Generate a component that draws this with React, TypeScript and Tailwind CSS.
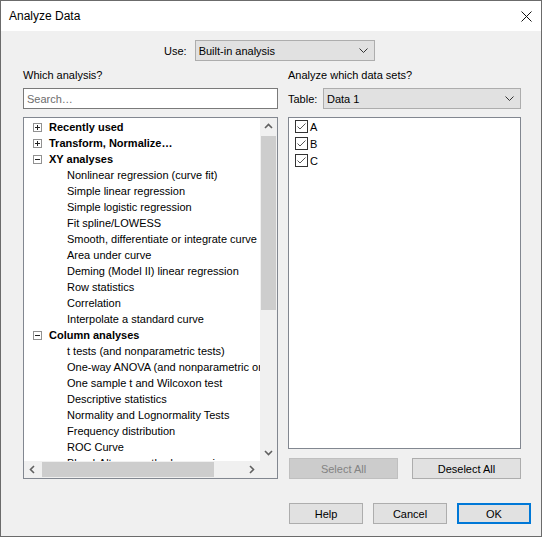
import React from "react";

const FONT = { fontFamily: '"Liberation Sans", Arial, sans-serif' };

type Row = { k: "g+" | "g-" | "i"; t: string };
const rows: Row[] = [
  { k: "g+", t: "Recently used" },
  { k: "g+", t: "Transform, Normalize…" },
  { k: "g-", t: "XY analyses" },
  { k: "i", t: "Nonlinear regression (curve fit)" },
  { k: "i", t: "Simple linear regression" },
  { k: "i", t: "Simple logistic regression" },
  { k: "i", t: "Fit spline/LOWESS" },
  { k: "i", t: "Smooth, differentiate or integrate curve" },
  { k: "i", t: "Area under curve" },
  { k: "i", t: "Deming (Model II) linear regression" },
  { k: "i", t: "Row statistics" },
  { k: "i", t: "Correlation" },
  { k: "i", t: "Interpolate a standard curve" },
  { k: "g-", t: "Column analyses" },
  { k: "i", t: "t tests (and nonparametric tests)" },
  { k: "i", t: "One-way ANOVA (and nonparametric or mixed)" },
  { k: "i", t: "One sample t and Wilcoxon test" },
  { k: "i", t: "Descriptive statistics" },
  { k: "i", t: "Normality and Lognormality Tests" },
  { k: "i", t: "Frequency distribution" },
  { k: "i", t: "ROC Curve" },
  { k: "i", t: "Bland-Altman method comparison" },
];

function Chevron() {
  return (
    <svg width="9" height="5" viewBox="0 0 9 5">
      <polyline points="0.5,0.5 4.5,4.5 8.5,0.5" fill="none" stroke="#333" strokeWidth="1" />
    </svg>
  );
}

function ScrollArrow({ dir }: { dir: "up" | "down" | "left" | "right" }) {
  const p: Record<string, string> = {
    up: "1,6 4.5,2.5 8,6",
    down: "1,3 4.5,6.5 8,3",
    left: "6,1 2.5,4.5 6,8",
    right: "3,1 6.5,4.5 3,8",
  };
  return (
    <svg width="9" height="9" viewBox="0 0 9 9">
      <polyline points={p[dir]} fill="none" stroke="#606060" strokeWidth="1.6" />
    </svg>
  );
}

function Expander({ open }: { open: boolean }) {
  return (
    <div className="relative w-[9px] h-[9px] border border-[#919191] bg-white shrink-0">
      <div className="absolute left-[1px] top-[3px] w-[5px] h-[1px] bg-[#222]" />
      {!open && <div className="absolute left-[3px] top-[1px] w-[1px] h-[5px] bg-[#222]" />}
    </div>
  );
}

function Dropdown({ text, w }: { text: string; w: string }) {
  return (
    <div className={`${w} h-[21px] border border-[#adadad] bg-[#e1e1e1] flex items-center justify-between pl-[3px] pr-[6px]`}>
      <span>{text}</span>
      <Chevron />
    </div>
  );
}

function Checkbox({ label }: { label: string }) {
  return (
    <div className="h-[17px] flex items-center pl-[6px]">
      <div className="w-[13px] h-[13px] border border-[#333] bg-white flex items-center justify-center">
        <svg width="11" height="11" viewBox="0 0 11 11">
          <polyline points="1.5,5.5 4,8 9.5,2.5" fill="none" stroke="#555" strokeWidth="1" />
        </svg>
      </div>
      <span className="ml-[2px]">{label}</span>
    </div>
  );
}

function Btn({ children, cls = "" }: { children: React.ReactNode; cls?: string }) {
  return (
    <div className={`h-[21px] flex items-center justify-center border border-[#adadad] bg-[#e1e1e1] ${cls}`}>
      {children}
    </div>
  );
}

export default function App() {
  return (
    <div
      style={FONT}
      className="w-[542px] h-[537px] border border-[#6b6b6b] bg-[#f0f0f0] flex flex-col text-[11px] text-black leading-[16px] overflow-hidden"
    >
      {/* title bar */}
      <div className="h-[30px] bg-white flex items-center justify-between pl-[8px] pr-[9px] shrink-0">
        <span className="text-[12px]">Analyze Data</span>
        <svg width="11" height="11" viewBox="0 0 11 11">
          <line x1="0.5" y1="0.5" x2="10.5" y2="10.5" stroke="#111" strokeWidth="1" />
          <line x1="10.5" y1="0.5" x2="0.5" y2="10.5" stroke="#111" strokeWidth="1" />
        </svg>
      </div>

      {/* Use row */}
      <div className="mt-[9px] flex items-center pl-[163px]">
        <span>Use:</span>
        <div className="ml-[8px]">
          <Dropdown text="Built-in analysis" w="w-[180px]" />
        </div>
      </div>

      {/* main columns */}
      <div className="flex gap-[10px] pl-[22px] pr-[20px]">
        {/* left */}
        <div className="w-[255px] flex flex-col">
          <div className="mt-[6px] h-[16px]">Which analysis?</div>
          <div className="mt-[5px] h-[21px] border border-[#7a7a7a] bg-white flex items-center pl-[3px] text-[#6d6d6d]">
            Search…
          </div>
          <div className="mt-[8px] h-[362px] border border-[#828790] bg-white flex flex-col">
            <div className="flex flex-1 min-h-0">
              <div className="flex-1 overflow-hidden pt-[1px]">
                {rows.map((r, i) =>
                  r.k === "i" ? (
                    <div key={i} className="h-[16px] pl-[43px] whitespace-nowrap">
                      {r.t}
                    </div>
                  ) : (
                    <div key={i} className="h-[16px] pl-[9px] flex items-center whitespace-nowrap">
                      <Expander open={r.k === "g-"} />
                      <span className="ml-[7px] font-bold">{r.t}</span>
                    </div>
                  )
                )}
              </div>
              {/* vertical scrollbar */}
              <div className="w-[17px] bg-[#f0f0f0] flex flex-col">
                <div className="h-[17px] flex items-center justify-center">
                  <ScrollArrow dir="up" />
                </div>
                <div className="flex-1 pt-[1px]">
                  <div className="h-[174px] mx-[1px] bg-[#cdcdcd]" />
                </div>
                <div className="h-[17px] flex items-center justify-center">
                  <ScrollArrow dir="down" />
                </div>
              </div>
            </div>
            {/* horizontal scrollbar */}
            <div className="h-[17px] flex shrink-0">
              <div className="flex-1 bg-[#f0f0f0] flex items-center">
                <div className="w-[17px] h-[17px] flex items-center justify-center">
                  <ScrollArrow dir="left" />
                </div>
                <div className="flex-1 h-[17px] pl-[1px] py-[1px]">
                  <div className="w-[172px] h-full bg-[#cdcdcd]" />
                </div>
                <div className="w-[17px] h-[17px] flex items-center justify-center">
                  <ScrollArrow dir="right" />
                </div>
              </div>
              <div className="w-[17px] bg-[#f0f0f0]" />
            </div>
          </div>
        </div>

        {/* right */}
        <div className="w-[233px] flex flex-col">
          <div className="mt-[6px] h-[16px]">Analyze which data sets?</div>
          <div className="mt-[5px] h-[21px] flex items-center justify-between">
            <span>Table:</span>
            <Dropdown text="Data 1" w="w-[198px]" />
          </div>
          <div className="mt-[8px] h-[332px] border border-[#828790] bg-white">
            <Checkbox label="A" />
            <Checkbox label="B" />
            <Checkbox label="C" />
          </div>
          <div className="mt-[9px] flex justify-between pl-[1px]">
            <Btn cls="w-[109px] !bg-[#cccccc] !border-[#bfbfbf] text-[#838383]">Select All</Btn>
            <Btn cls="w-[109px]">Deselect All</Btn>
          </div>
        </div>
      </div>

      {/* bottom buttons */}
      <div className="mt-[24px] flex justify-end gap-[10px] pr-[10px]">
        <Btn cls="w-[74px]">Help</Btn>
        <Btn cls="w-[74px]">Cancel</Btn>
        <div className="w-[74px] h-[21px] flex items-center justify-center border-2 border-[#0078d7] bg-[#e1e1e1]">
          OK
        </div>
      </div>
    </div>
  );
}
